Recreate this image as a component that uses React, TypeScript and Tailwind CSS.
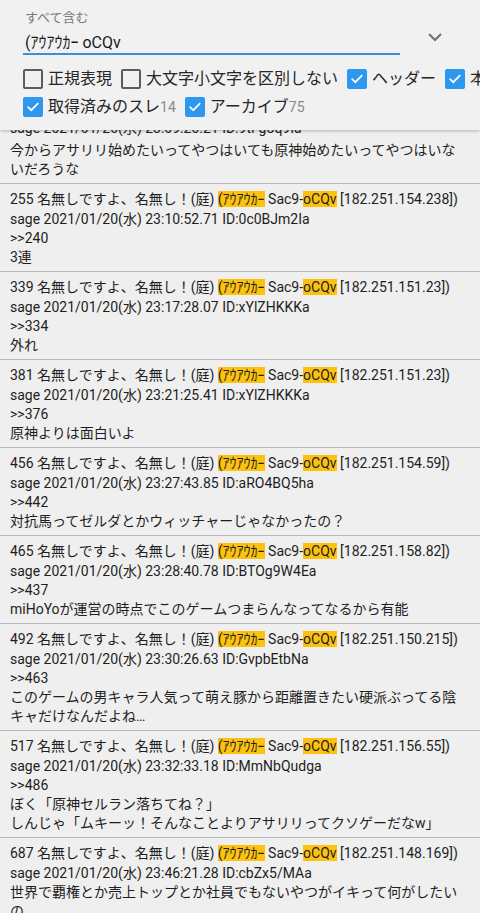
import React from "react";

type Post = {
  no?: number;
  ip?: string;
  date: string;
  id: string;
  anchor?: string;
  body: string[];
};

const list: Post[] = [
  {
    no: 255,
    ip: "182.251.154.238",
    date: "23:10:52.71",
    id: "0c0BJm2Ia",
    anchor: "240",
    body: ["3連"],
  },
  {
    no: 339,
    ip: "182.251.151.23",
    date: "23:17:28.07",
    id: "xYlZHKKKa",
    anchor: "334",
    body: ["外れ"],
  },
  {
    no: 381,
    ip: "182.251.151.23",
    date: "23:21:25.41",
    id: "xYlZHKKKa",
    anchor: "376",
    body: ["原神よりは面白いよ"],
  },
  {
    no: 456,
    ip: "182.251.154.59",
    date: "23:27:43.85",
    id: "aRO4BQ5ha",
    anchor: "442",
    body: ["対抗馬ってゼルダとかウィッチャーじゃなかったの？"],
  },
  {
    no: 465,
    ip: "182.251.158.82",
    date: "23:28:40.78",
    id: "BTOg9W4Ea",
    anchor: "437",
    body: ["miHoYoが運営の時点でこのゲームつまらんなってなるから有能"],
  },
  {
    no: 492,
    ip: "182.251.150.215",
    date: "23:30:26.63",
    id: "GvpbEtbNa",
    anchor: "463",
    body: ["このゲームの男キャラ人気って萌え豚から距離置きたい硬派ぶってる陰キャだけなんだよね…"],
  },
  {
    no: 517,
    ip: "182.251.156.55",
    date: "23:32:33.18",
    id: "MmNbQudga",
    anchor: "486",
    body: ["ぼく「原神セルラン落ちてね？」", "しんじゃ「ムキーッ！そんなことよりアサリリってクソゲーだなw」"],
  },
  {
    no: 687,
    ip: "182.251.148.169",
    date: "23:46:21.28",
    id: "cbZx5/MAa",
    body: ["世界で覇権とか売上トップとか社員でもないやつがイキって何がしたいの"],
  },
];

function Check({ on }: { on: boolean }) {
  if (!on) {
    return <span className="w-5 h-5 shrink-0 rounded-[2px] border-2 border-[#5c5c5c]" />;
  }
  return (
    <span className="w-5 h-5 shrink-0 rounded-[2px] bg-[#2e97f0] flex items-center justify-center">
      <svg width="14" height="14" viewBox="0 0 24 24" fill="none" stroke="white" strokeWidth="3" strokeLinecap="square">
        <path d="M4 12.5l5 5L20 6.5" />
      </svg>
    </span>
  );
}

function Option({ on, label, count }: { on: boolean; label: string; count?: number }) {
  return (
    <div className="flex items-center gap-[5px] shrink-0">
      <Check on={on} />
      <span className="text-[16px] leading-5 text-[#262626]">
        {label}
        {count !== undefined && <span className="text-[14px] text-[#8a8a8a]">{count}</span>}
      </span>
    </div>
  );
}

function Mark({ children }: { children: React.ReactNode }) {
  return <span className="bg-[#fdc20f]">{children}</span>;
}

function Entry({ p }: { p: Post }) {
  return (
    <div className="border-t border-[#b8b8b8] pt-[5px] pb-[4px] pl-[10px] pr-[15px]">
      <div className="leading-[21px] whitespace-nowrap">
        {p.no} 名無しですよ、名無し！(庭) <Mark>(ｱｳｱｳｶｰ</Mark> Sac9-<Mark>oCQv</Mark> [{p.ip}])
      </div>
      <div className="leading-[19px]">
        sage 2021/01/20(水) {p.date} ID:{p.id}
      </div>
      {p.anchor && <div className="leading-[19px]">&gt;&gt;{p.anchor}</div>}
      {p.body.map((b, i) => (
        <div key={i} className="leading-[19px]">
          {b}
        </div>
      ))}
    </div>
  );
}

export default function App() {
  return (
    <div
      className="w-[480px] h-[913px] overflow-hidden bg-[#efefef] text-[#1e1e1e]"
      style={{ fontFamily: 'Roboto, "Noto Sans CJK JP", sans-serif' }}
    >
      {/* search panel */}
      <div className="relative z-10 h-[130px] bg-[#f1f1f1] shadow-[0_1px_3px_rgba(0,0,0,0.25)] pl-[23px] pt-[10px] overflow-hidden">
        <div className="flex items-start">
          <div className="w-[377px] border-b-2 border-[#3d8fdd]">
            <div className="pl-[2px] text-[13px] leading-4 text-[#7a7a7a]">すべて含む</div>
            <div className="pl-[2px] mt-[7px] text-[16px] leading-5 text-[#1a1a1a]">(ｱｳｱｳｶｰ oCQv</div>
          </div>
          <svg className="ml-[27px] mt-[22px]" width="16" height="10" viewBox="0 0 16 10" fill="none" stroke="#6e6e6e" strokeWidth="2">
            <path d="M2 2l6 6 6-6" />
          </svg>
        </div>
        <div className="flex items-center gap-[9px] mt-[14px] whitespace-nowrap">
          <Option on={false} label="正規表現" />
          <Option on={false} label="大文字小文字を区別しない" />
          <Option on={true} label="ヘッダー" />
          <Option on={true} label="本文" />
        </div>
        <div className="flex items-center gap-[9px] mt-[8px] whitespace-nowrap">
          <Option on={true} label="取得済みのスレ" count={14} />
          <Option on={true} label="アーカイブ" count={75} />
        </div>
      </div>

      {/* results */}
      <div className="text-[14px]">
        <div className="-mt-[37px] pt-[5px] pb-[4px] pl-[10px] pr-[15px]">
          <div className="leading-[21px]">&nbsp;</div>
          <div className="leading-[19px] mb-[3px]">sage 2021/01/20(水) 23:09:26.21 ID:9tFgoq9Ia</div>
          <div className="leading-[19px]">今からアサリリ始めたいってやつはいても原神始めたいってやつはいないだろうな</div>
        </div>
        {list.map((p) => (
          <Entry key={p.no} p={p} />
        ))}
      </div>
    </div>
  );
}
